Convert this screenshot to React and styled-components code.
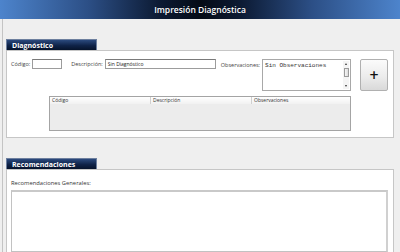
import React from "react";
import styled, { createGlobalStyle } from "styled-components";

const GlobalStyle = createGlobalStyle`
  html, body {
    margin: 0;
    padding: 0;
    background: #efefef;
    font-family: "Open Sans", "Liberation Sans", sans-serif;
  }
`;

const Page = styled.div`
  width: 400px;
  height: 252px;
  overflow: hidden;
  background: #efefef;
`;

const Header = styled.div`
  height: 19px;
  display: flex;
  align-items: center;
  justify-content: center;
  background: linear-gradient(
    to right,
    #4d84cc 0%,
    #2c4f86 22%,
    #0c1a33 40%,
    #050b16 50%,
    #0c1a33 60%,
    #2c4f86 78%,
    #4d84cc 100%
  );
  color: #ffffff;
  font-size: 8.5px;
  font-weight: 600;
`;

const Frame = styled.div`
  margin-left: 2px;
  border-left: 1px solid #c4c4c4;
  padding: 20px 6px 0 3px;
  height: 233px;
  box-sizing: border-box;
`;

const Section = styled.section`
  display: flex;
  flex-direction: column;
  margin-bottom: 20px;
`;

const SectionTitle = styled.div`
  width: 91px;
  height: 11px;
  box-sizing: border-box;
  padding-left: 5px;
  display: flex;
  align-items: center;
  background: linear-gradient(to bottom, #2b4a7e 0%, #0f2348 55%, #06132b 100%);
  border: 1px solid #6d7f9e;
  border-bottom: none;
  color: #ffffff;
  font-size: 7px;
  font-weight: 700;
`;

const Panel = styled.div`
  background: #ffffff;
  border: 1px solid #c6c6c6;
  height: ${(p) => p.$height}px;
  box-sizing: border-box;
  padding: ${(p) => p.$pad};
`;

const Row = styled.div`
  display: flex;
  align-items: flex-start;
`;

const Field = styled.div`
  display: flex;
  align-items: ${(p) => (p.$top ? "flex-start" : "center")};
  gap: 2px;
  height: ${(p) => (p.$top ? "auto" : "10px")};
  margin-left: ${(p) => p.$ml || 0}px;
`;

const Label = styled.span`
  font-size: 5.5px;
  color: #444;
  white-space: nowrap;
  margin-top: ${(p) => (p.$top ? "2px" : "0")};
`;

const TextInput = styled.div`
  width: ${(p) => p.$w}px;
  height: 10px;
  box-sizing: border-box;
  border: 1px solid #9c9c9c;
  border-top-color: #7a7a7a;
  background: #fff;
  font-size: 5px;
  color: #222;
  display: flex;
  align-items: center;
  padding-left: 2px;
`;

const ObsBox = styled.div`
  width: 89px;
  height: 32px;
  box-sizing: border-box;
  border: 1px solid #a8a8a8;
  background: #fff;
  display: flex;
`;

const ObsText = styled.div`
  flex: 1;
  font-family: "Liberation Mono", monospace;
  font-size: 6px;
  color: #333;
  padding: 2px 0 0 2px;
`;

const ScrollTrack = styled.div`
  width: 6px;
  margin: 1px 1px 1px 0;
  background: #f4f4f4;
  display: flex;
  flex-direction: column;
  align-items: center;
  justify-content: space-between;
`;

const Arrow = styled.div`
  width: 0;
  height: 0;
  border-left: 1.5px solid transparent;
  border-right: 1.5px solid transparent;
  ${(p) => (p.$down ? "border-top: 2px solid #333;" : "border-bottom: 2px solid #333;")}
  margin: 2px 0;
`;

const Thumb = styled.div`
  width: 5px;
  height: 9px;
  box-sizing: border-box;
  border: 1px solid #9a9a9a;
  background: linear-gradient(to right, #f6f6f6, #dcdcdc);
  margin-bottom: auto;
  margin-top: 1px;
`;

const AddButton = styled.button`
  width: 28px;
  height: 32px;
  margin-left: 9px;
  padding: 0;
  border: 1px solid #b0b0b0;
  border-radius: 2px;
  background: linear-gradient(to bottom, #fbfbfb 0%, #ececec 55%, #d9d9d9 100%);
  font-family: "DejaVu Sans", sans-serif;
  font-size: 12px;
  font-weight: 700;
  color: #111;
  line-height: 1;
  display: flex;
  align-items: center;
  justify-content: center;
`;

const Grid = styled.div`
  width: 302px;
  height: 35px;
  margin: 5px 0 0 38px;
  box-sizing: border-box;
  border: 1px solid #a4a4a4;
  background: #ececec;
`;

const GridHead = styled.div`
  display: grid;
  grid-template-columns: 100px 101px 1fr;
  height: 7px;
  background: linear-gradient(to bottom, #ffffff, #f1f1f1);
`;

const GridCol = styled.div`
  font-size: 5px;
  color: #333;
  padding-left: 2px;
  line-height: 7px;
  border-left: ${(p) => (p.$first ? "none" : "1px solid #d0d0d0")};
`;

const RecLabel = styled.div`
  font-size: 5.8px;
  color: #333;
  margin-bottom: 3px;
`;

const RecArea = styled.div`
  width: 377px;
  height: 62px;
  box-sizing: border-box;
  border: 1px solid #c2c2c2;
  border-top: 2px solid #c9c9c9;
  border-right: 2px solid #d0d0d0;
  background: #fff;
`;

export default function App() {
  return (
    <Page>
      <GlobalStyle />
      <Header>Impresión Diagnóstica</Header>
      <Frame>
        <Section>
          <SectionTitle>Diagnóstico</SectionTitle>
          <Panel $height={88} $pad="8px 0 0 4px">
            <Row>
              <Field>
                <Label>Código:</Label>
                <TextInput $w={30} />
              </Field>
              <Field $ml={9}>
                <Label>Descripción:</Label>
                <TextInput $w={111}>Sin Diagnóstico</TextInput>
              </Field>
              <Field $ml={5} $top>
                <Label $top>Observaciones:</Label>
                <ObsBox>
                  <ObsText>Sin Observaciones</ObsText>
                  <ScrollTrack>
                    <Arrow />
                    <Thumb />
                    <Arrow $down />
                  </ScrollTrack>
                </ObsBox>
              </Field>
              <AddButton>+</AddButton>
            </Row>
            <Grid>
              <GridHead>
                <GridCol $first>Código</GridCol>
                <GridCol>Descripción</GridCol>
                <GridCol>Observaciones</GridCol>
              </GridHead>
            </Grid>
          </Panel>
        </Section>
        <Section>
          <SectionTitle>Recomendaciones</SectionTitle>
          <Panel $height={90} $pad="9px 0 0 4px">
            <RecLabel>Recomendaciones Generales:</RecLabel>
            <RecArea />
          </Panel>
        </Section>
      </Frame>
    </Page>
  );
}
